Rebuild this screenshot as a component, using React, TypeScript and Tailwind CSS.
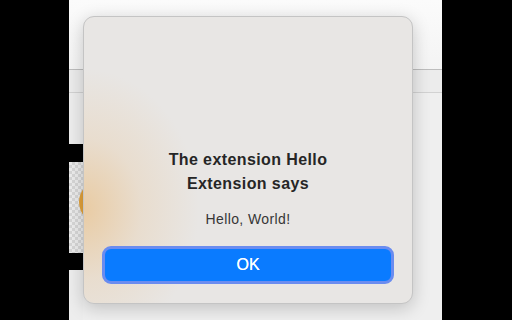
import React from "react";

// Background page strip visible at the left edge of the dialog
function LeftStrip() {
  return (
    <div className="w-[14px] flex flex-col">
      <div className="h-[51px] bg-[#ededed]"></div>
      <div className="h-[18px] bg-black"></div>
      <div className="relative h-[91px] bg-[image:repeating-conic-gradient(#d6d6d6_0%_25%,#ececec_0%_50%)] bg-[length:6px_6px]">
        <div className="absolute left-[10px] top-[18px] w-[44px] h-[44px] rounded-full bg-[#e3a23a]"></div>
      </div>
      <div className="h-[17px] bg-black"></div>
      <div className="flex-1 bg-[#ededed]"></div>
    </div>
  );
}

function AlertDialog() {
  return (
    <div className="absolute left-[14px] top-[16px] w-[330px] h-[288px] rounded-[11px] border border-[#c4c4c4] bg-[#e8e6e4] shadow-[0_4px_18px_rgba(0,0,0,0.2)] overflow-hidden">
      <div className="absolute inset-0 bg-[radial-gradient(ellipse_115px_140px_at_0px_192px,rgba(233,202,160,0.95),rgba(233,212,185,0.5)_50%,rgba(232,230,228,0))]"></div>
      <div className="relative flex flex-col items-center px-[18px] pt-[131px]">
        <h1 className="w-[220px] text-center text-[16px] leading-6 font-bold tracking-[0.4px] text-[#262626]">
          The extension Hello Extension says
        </h1>
        <p className="mt-[13px] text-[14px] leading-5 tracking-[0.4px] text-[#363636]">
          Hello, World!
        </p>
        <button className="mt-[17px] w-full h-[38px] rounded-[9px] border-[3px] border-[#6a8cf0] bg-[#0a7bff] text-white text-[16px] flex items-center justify-center [text-shadow:0_0_0.4px_#fff]">
          OK
        </button>
      </div>
    </div>
  );
}

export default function App() {
  return (
    <div
      className="w-[512px] h-[320px] bg-black pl-[69px] overflow-hidden"
      style={{ fontFamily: '"Liberation Sans", Arial, sans-serif' }}
    >
      <div className="relative w-[373px] h-full flex flex-col bg-[#efefef]">
        <div className="h-[70px] bg-[linear-gradient(#fbfbfb,#f4f4f4)] border-b border-[#bdbdbd]"></div>
        <div className="h-[23px] bg-[#ececec] border-b border-[#d2d2d2]"></div>
        <div className="flex-1 flex">
          <LeftStrip />
          <div className="flex-1 bg-[#efefef]"></div>
        </div>
        <AlertDialog />
      </div>
    </div>
  );
}
